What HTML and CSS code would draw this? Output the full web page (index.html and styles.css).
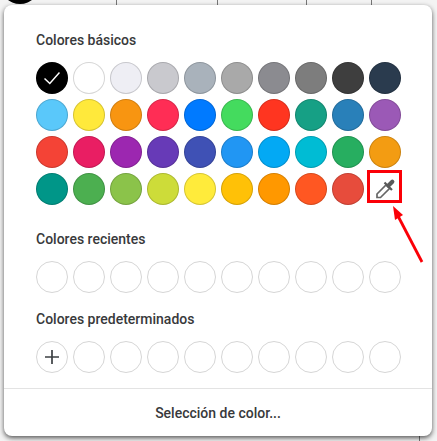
FILE: index.html
```html
<!DOCTYPE html>
<html lang="es">
<head>
  <meta charset="UTF-8">
  <meta name="viewport" content="width=device-width, initial-scale=1.0">
  <title>Selector de color</title>
  <link rel="stylesheet" href="styles.css">
</head>
<body>
  <!-- tabla que queda detras del panel -->
  <div class="backdrop">
    <span class="backdrop-dot"></span>
    <span class="backdrop-line line-a"></span>
    <span class="backdrop-line line-b"></span>
    <span class="backdrop-line line-c"></span>
    <span class="backdrop-line line-d"></span>
    <span class="backdrop-line line-e"></span>
  </div>

  <div class="picker">
    <div class="picker-body">
      <h2 class="section-title">Colores básicos</h2>
      <div class="swatches">
        <span class="swatch selected" style="background:#000000">
          <svg viewBox="0 0 16 16" width="16" height="16"><path d="M0.5 8.5 L5.8 13.5 L15.5 2.5" fill="none" stroke="#fff" stroke-width="1.5"/></svg>
        </span>
        <span class="swatch" style="background:#ffffff"></span>
        <span class="swatch" style="background:#eeeef4"></span>
        <span class="swatch" style="background:#c9c9ce"></span>
        <span class="swatch" style="background:#a9b2bb"></span>
        <span class="swatch" style="background:#a9a9a9"></span>
        <span class="swatch" style="background:#8b8b90"></span>
        <span class="swatch" style="background:#7d7d7d"></span>
        <span class="swatch" style="background:#3e3e3e"></span>
        <span class="swatch" style="background:#2a3b4e"></span>

        <span class="swatch" style="background:#5ac8fa"></span>
        <span class="swatch" style="background:#ffe93b"></span>
        <span class="swatch" style="background:#f89511"></span>
        <span class="swatch" style="background:#ff2d55"></span>
        <span class="swatch" style="background:#007aff"></span>
        <span class="swatch" style="background:#44db5e"></span>
        <span class="swatch" style="background:#ff3520"></span>
        <span class="swatch" style="background:#16a085"></span>
        <span class="swatch" style="background:#2980b9"></span>
        <span class="swatch" style="background:#9b59b6"></span>

        <span class="swatch" style="background:#f44336"></span>
        <span class="swatch" style="background:#e91e63"></span>
        <span class="swatch" style="background:#9c27b0"></span>
        <span class="swatch" style="background:#673ab7"></span>
        <span class="swatch" style="background:#3f51b5"></span>
        <span class="swatch" style="background:#2196f3"></span>
        <span class="swatch" style="background:#03a9f4"></span>
        <span class="swatch" style="background:#00bcd4"></span>
        <span class="swatch" style="background:#27ae60"></span>
        <span class="swatch" style="background:#f39c12"></span>

        <span class="swatch" style="background:#009688"></span>
        <span class="swatch" style="background:#4caf50"></span>
        <span class="swatch" style="background:#8bc34a"></span>
        <span class="swatch" style="background:#cddc39"></span>
        <span class="swatch" style="background:#ffeb3b"></span>
        <span class="swatch" style="background:#ffc107"></span>
        <span class="swatch" style="background:#ff9800"></span>
        <span class="swatch" style="background:#ff5722"></span>
        <span class="swatch" style="background:#e74c3c"></span>
        <span class="swatch eyedropper">
          <svg viewBox="0 0 24 24" width="24" height="24">
            <path d="M4 17 L13 8 L16.5 11.5 L7.5 20.5 H4 Z" fill="none" stroke="#666" stroke-width="1.7"/>
            <path d="M11.5 5.5 L19 13" fill="none" stroke="#5a5a5a" stroke-width="2.2"/>
            <path d="M15.5 8.5 L19.3 4.7" fill="none" stroke="#5a5a5a" stroke-width="4.2" stroke-linecap="round"/>
          </svg>
        </span>
      </div>

      <h2 class="section-title">Colores recientes</h2>
      <div class="swatches swatches-recent">
        <span class="swatch empty"></span>
        <span class="swatch empty"></span>
        <span class="swatch empty"></span>
        <span class="swatch empty"></span>
        <span class="swatch empty"></span>
        <span class="swatch empty"></span>
        <span class="swatch empty"></span>
        <span class="swatch empty"></span>
        <span class="swatch empty"></span>
        <span class="swatch empty"></span>
      </div>

      <h2 class="section-title">Colores predeterminados</h2>
      <div class="swatches swatches-last">
        <span class="swatch add">
          <svg viewBox="0 0 16 16" width="16" height="16"><path d="M8 1v14M1 8h14" fill="none" stroke="#3c4043" stroke-width="1.7"/></svg>
        </span>
        <span class="swatch empty"></span>
        <span class="swatch empty"></span>
        <span class="swatch empty"></span>
        <span class="swatch empty"></span>
        <span class="swatch empty"></span>
        <span class="swatch empty"></span>
        <span class="swatch empty"></span>
        <span class="swatch empty"></span>
        <span class="swatch empty"></span>
      </div>
    </div>

    <div class="picker-footer">Selección de color...</div>
  </div>

  <!-- anotacion roja sobre el cuentagotas -->
  <span class="highlight"></span>
  <svg class="arrow" viewBox="0 0 40 60" width="40" height="60">
    <path d="M32 58 L8 12" fill="none" stroke="#fb0007" stroke-width="2.8"/>
    <path d="M3 2 L13 11 L5 16 Z" fill="#fb0007"/>
  </svg>
</body>
</html>
```

FILE: styles.css
```css
/* base */
html, body {
  margin: 0;
  padding: 0;
}
body {
  position: relative;
  width: 437px;
  height: 441px;
  overflow: hidden;
  background: #f3f3f3;
  font-family: Roboto, "Liberation Sans", sans-serif;
  color: #333;
}

/* fondo */
.backdrop {
  position: absolute;
  top: 0;
  left: 0;
  width: 437px;
  height: 441px;
}
.backdrop-dot {
  position: absolute;
  top: -36px;
  left: 0;
  width: 40px;
  height: 40px;
  border-radius: 50%;
  background: #000;
}
.backdrop-line {
  position: absolute;
  top: 0;
  width: 1px;
  height: 5px;
  background: #777;
}
.line-a { left: 116px; }
.line-b { left: 217px; }
.line-c { left: 306px; }
.line-d { left: 371px; }
.line-e { left: 419px; top: 436px; }

/* panel */
.picker {
  position: absolute;
  top: 5px;
  left: 4px;
  width: 428px;
  height: 431px;
  display: flex;
  flex-direction: column;
  background: #fff;
  border-radius: 8px;
  box-shadow: 0 2px 5px rgba(0,0,0,0.65);
}
.picker-body {
  flex: 1;
  padding: 27px 32px 0;
}
.section-title {
  margin: 0 0 13px;
  font-size: 14px;
  line-height: 17px;
  font-weight: 500;
  color: #38393b;
}
.swatches {
  display: grid;
  grid-template-columns: repeat(10, 32px);
  gap: 5px;
  margin-bottom: 26px;
}
.swatches-recent {
  margin-bottom: 18px;
}
.swatches-last {
  margin-bottom: 0;
}
.swatch {
  width: 32px;
  height: 32px;
  box-sizing: border-box;
  display: flex;
  align-items: center;
  justify-content: center;
  border-radius: 50%;
  border: 1px solid rgba(0,0,0,0.16);
}
.swatch.empty,
.swatch.add {
  border-color: #d6d6d6;
}
.swatch.eyedropper {
  border: none;
  border-radius: 0;
}
.picker-footer {
  flex: none;
  height: 47px;
  border-top: 1px solid #e3e3e3;
  display: flex;
  align-items: center;
  justify-content: center;
  font-size: 14px;
  font-weight: 500;
  color: #38393b;
}

/* anotacion */
.highlight {
  position: absolute;
  top: 170px;
  left: 367px;
  width: 29px;
  height: 27px;
  border: 3px solid #fb0007;
}
.arrow {
  position: absolute;
  top: 204px;
  left: 390px;
}
```
